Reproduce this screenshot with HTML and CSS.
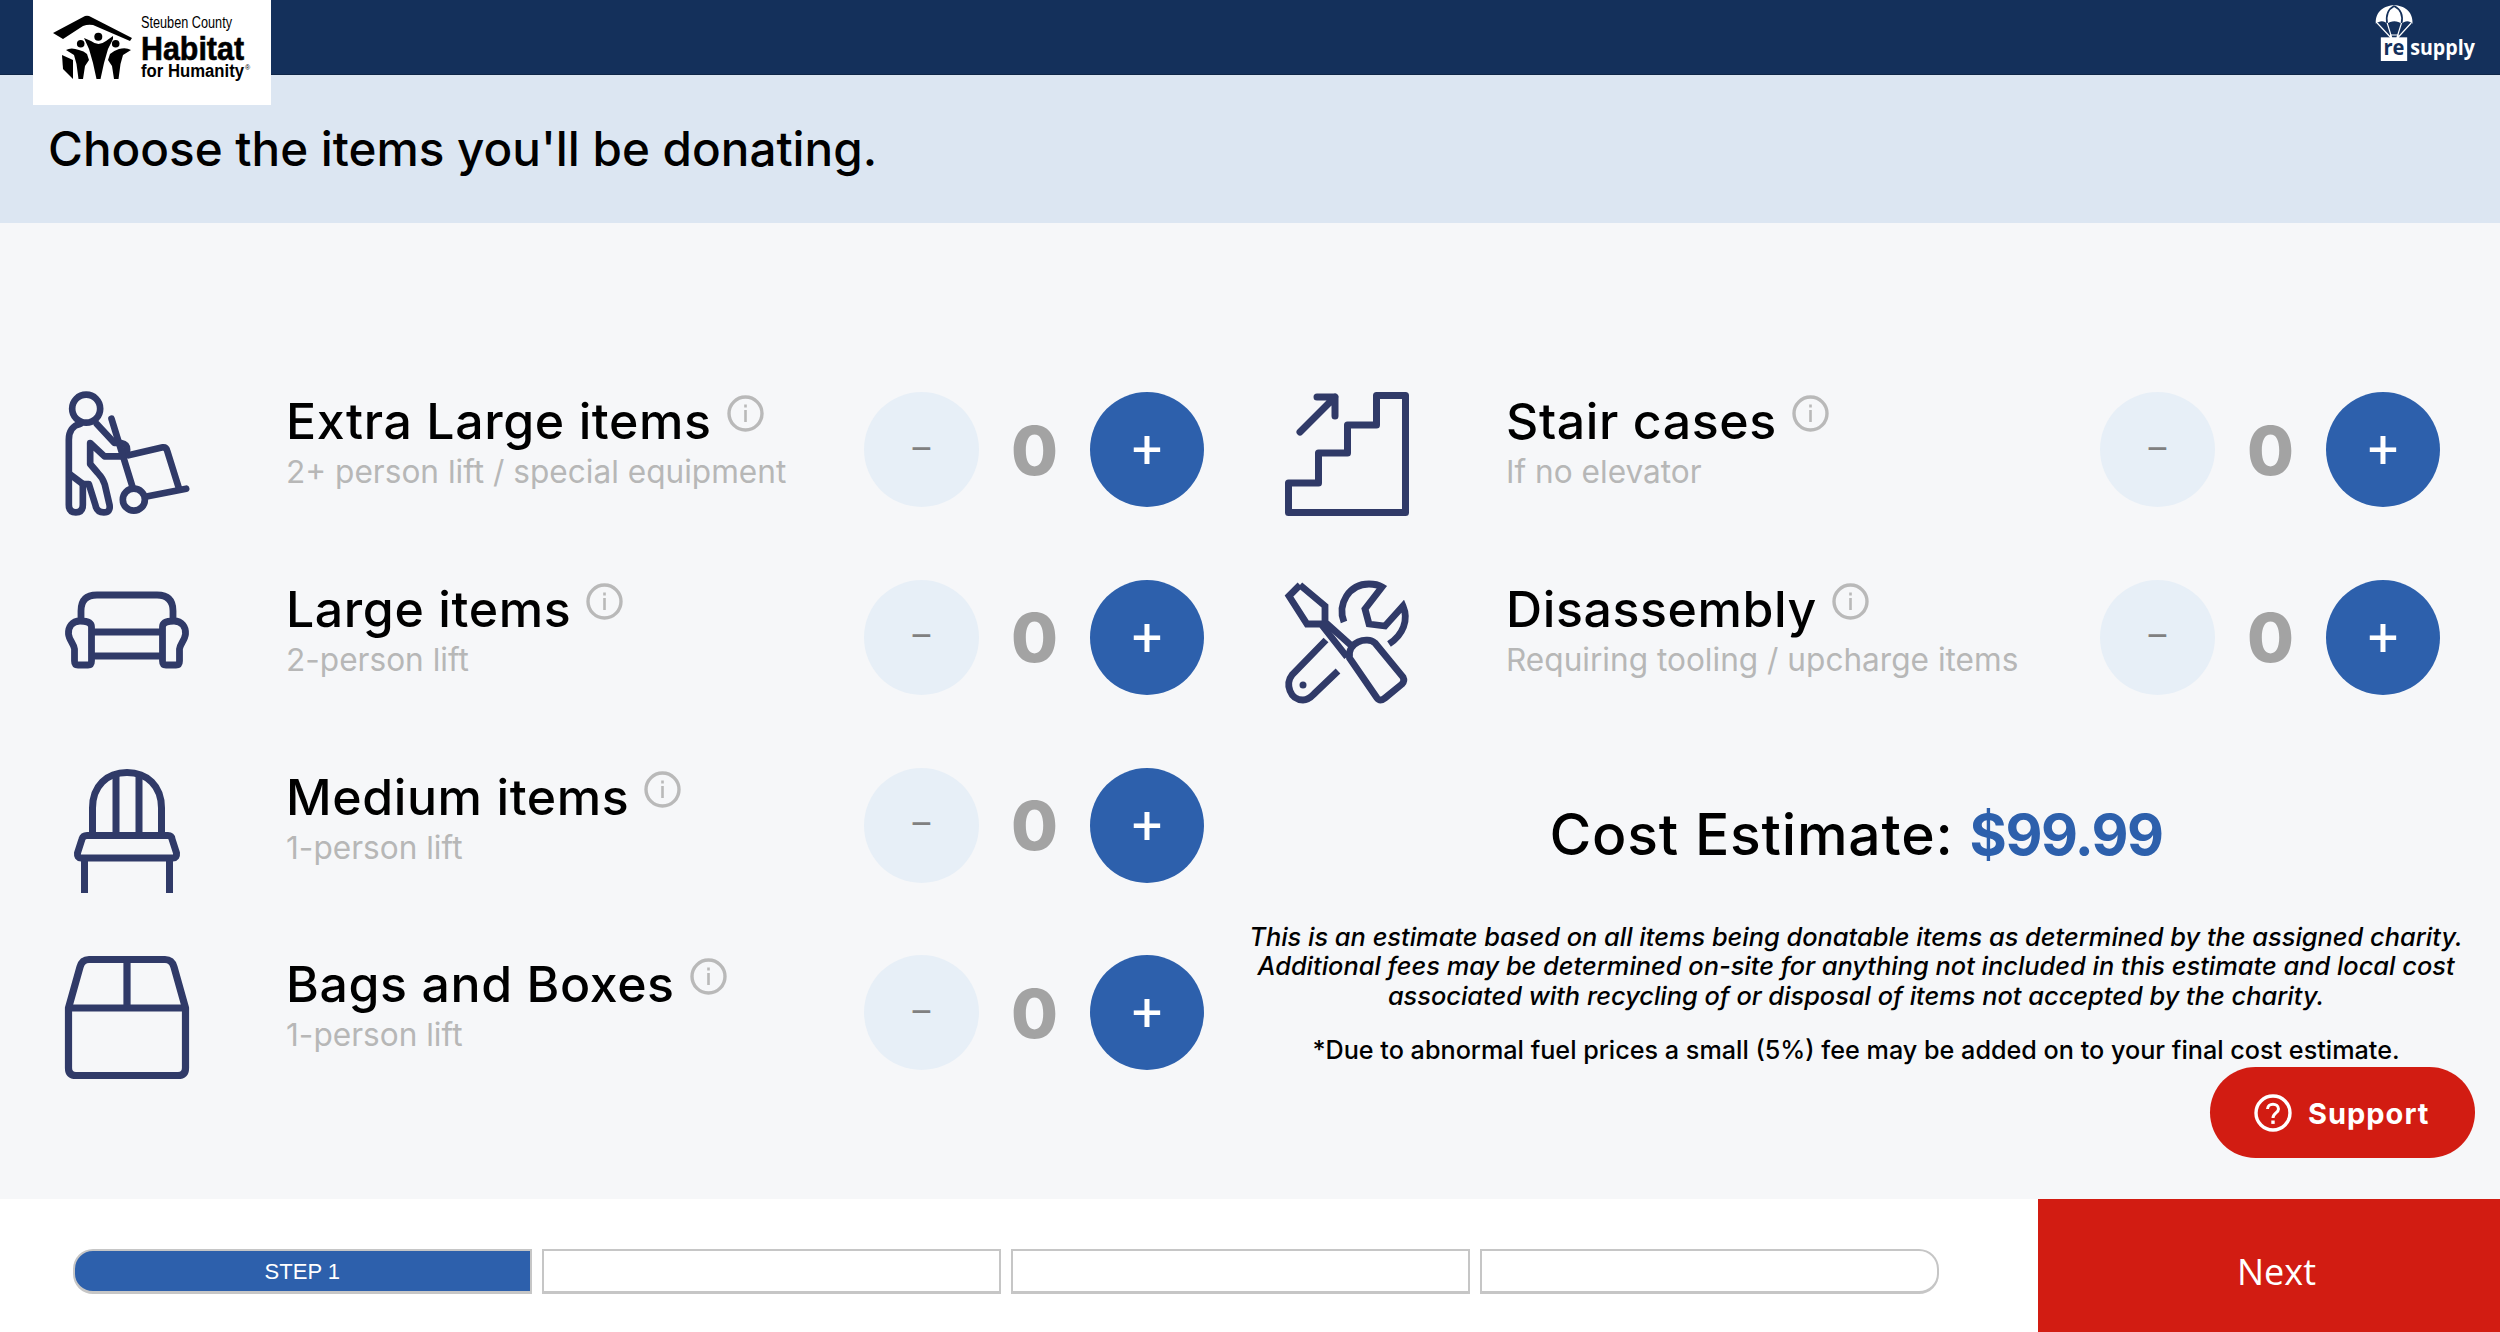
FILE: index.html
```html
<!DOCTYPE html>
<html lang="en">
<head>
<meta charset="utf-8">
<title>Choose items</title>
<link rel="stylesheet" href="styles.css">
</head>
<body>
<svg class="defs" width="0" height="0" aria-hidden="true">
  <defs>
    <symbol id="info" viewBox="0 0 37 37">
      <circle cx="18.5" cy="18.5" r="16.5" fill="none" stroke="#b9b9b9" stroke-width="3.4"/>
      <rect x="17.2" y="9.5" width="2.6" height="3" fill="#b9b9b9"/>
      <rect x="17.2" y="15" width="2.6" height="12" fill="#b9b9b9"/>
    </symbol>
  </defs>
</svg>
<header class="topbar">
  <div class="logo">
    <svg class="logo-svg" viewBox="0 0 238 105" width="238" height="105">
      <g fill="#000">
        <path d="M20 33 L52 16 Q55 15 58 17 L99 38 L97 41 L60 25 Q55 24 50 26 L30 39 Z"/>
        <circle cx="47.700" cy="43.700" r="3.800"/>
        <circle cx="65.300" cy="36.700" r="4"/>
        <circle cx="82.700" cy="43.700" r="3.800"/>
        <path d="M51 38 L58 41 Q62 44 65.500 44 Q69 44 73 41 L80 36 L80 39 L75 49 L71 63 L67.500 79 L63.500 79 L60 63 L56 49 Z"/>
        <path d="M33 50 Q38 47 46 50 Q51 51 54 54 L56 60 L52 66 L50 79 L45.500 79 L43.500 64 L41 55 Z"/>
        <path d="M98 50 Q93 47 86 49 Q80 51 77 54 L75 60 L79 66 L81 79 L85.500 79 L87.500 64 L90 55 Z"/>
        <path d="M29 55 L40 60 L40 79 L30 69 Z"/>
      </g>
      <text class="logo-small" x="108" y="28" textLength="91" lengthAdjust="spacingAndGlyphs">Steuben County</text>
      <text class="logo-big" x="108" y="60" textLength="103" lengthAdjust="spacingAndGlyphs">Habitat</text>
      <text class="logo-mid" x="108" y="77" textLength="103" lengthAdjust="spacingAndGlyphs">for Humanity</text>
      <text class="logo-reg" x="212" y="70">®</text>
    </svg>
  </div>
  <svg class="resupply" viewBox="220 10 350 180" width="117" height="60">
    <path fill="#fff" d="M228 72 C226 35 255 17 283 17 C311 17 340 35 338 72 C330 62 315 62 305 72 C295 62 272 62 262 72 C255 62 238 62 228 72 Z"/>
    <path fill="none" stroke="#14305b" stroke-width="5" d="M283 19 C262 30 258 50 262 72 M283 19 C304 30 310 50 305 72"/>
    <path fill="none" stroke="#fff" stroke-width="3.500" d="M232 70 L274 115 M262 70 L276 115 M305 70 L291 115 M334 70 L293 115"/>
    <rect x="272" y="106" width="23" height="10" fill="none" stroke="#fff" stroke-width="3"/>
    <rect x="243" y="113" width="79" height="71" fill="#fff"/>
    <text class="rs-re" x="251" y="166" textLength="63" lengthAdjust="spacingAndGlyphs">re</text>
    <text class="rs-supply" x="331" y="165" textLength="194" lengthAdjust="spacingAndGlyphs">supply</text>
  </svg>
</header>

<section class="subhead">
  <h1>Choose the items you'll be donating.</h1>
</section>

<main class="main">
  <div class="col col-left">
    <div class="row">
      <svg class="icon" viewBox="16.500 12 372 372" width="124" height="124">
        <g fill="none" stroke="#303a68" stroke-width="20" stroke-linecap="round" stroke-linejoin="round">
          <circle cx="80" cy="62" r="42"/>
          <path d="M62 108 C40 112 28 130 28 155 V350 Q28 373 49 373 Q70 373 70 350 V288 H88 L108 352 Q112 373 133 373 Q154 373 150 350 L136 290 Q130 270 115 255 L92 228 L92 165 L135 205 H185 Q203 203 203 185 Q203 168 185 165 H165 L112 108"/>
          <path d="M30 258 L70 288"/>
          <path d="M156 92 L220 300"/>
          <path d="M207 202 L310 178 Q320 177 323 188 L358 300"/>
          <path d="M265 325 L380 302"/>
          <circle cx="223" cy="335" r="33"/>
        </g>
      </svg>
      <div class="info">
        <div class="title"><span>Extra Large items</span><svg class="i"><use href="#info"/></svg></div>
        <div class="sub">2+ person lift / special equipment</div>
      </div>
      <div class="controls"><button class="btn minus">–</button><span class="count">0</span><button class="btn plus">+</button></div>
    </div>
    <div class="row">
      <svg class="icon" viewBox="0 0 124 124" width="124" height="124">
        <g fill="none" stroke="#303a68" stroke-width="6.800" stroke-linejoin="round">
          <path d="M16 40 V31 Q16 15 32 15 H92 Q108 15 108 31 V40"/>
          <path d="M15 41 C7 41 3 47 3.500 54 C4 60 9 64 9.500 69 V81 Q9.500 85 13 85 H23 Q26.500 85 26.500 81 V47 C26.500 43 22 41 15 41 Z"/>
          <path d="M109 41 C117 41 121 47 120.500 54 C120 60 115 64 114.500 69 V81 Q114.500 85 111 85 H101 Q97.500 85 97.500 81 V47 C97.500 43 102 41 109 41 Z"/>
          <path d="M26.500 52 H97.500 M26.500 76 H97.500"/>
        </g>
      </svg>
      <div class="info">
        <div class="title"><span>Large items</span><svg class="i"><use href="#info"/></svg></div>
        <div class="sub">2-person lift</div>
      </div>
      <div class="controls"><button class="btn minus">–</button><span class="count">0</span><button class="btn plus">+</button></div>
    </div>
    <div class="row">
      <svg class="icon" viewBox="0 0 124 124" width="124" height="124">
        <g fill="none" stroke="#303a68" stroke-width="7" stroke-linejoin="round">
          <path d="M27.500 66 V40 C27.500 18 42 4.500 62 4.500 C82 4.500 96.500 18 96.500 40 V66"/>
          <path d="M51 7 V66 M74 7 V66"/>
          <path d="M22 67.500 H103 Q106.500 67.500 107 71 L111.500 85 Q112 90 108 90 H16 Q12 90 12.500 85 L17 71 Q18 67.500 22 67.500 Z"/>
          <path d="M19.500 90 V125 M104.500 90 V125"/>
        </g>
      </svg>
      <div class="info">
        <div class="title"><span>Medium items</span><svg class="i"><use href="#info"/></svg></div>
        <div class="sub">1-person lift</div>
      </div>
      <div class="controls"><button class="btn minus">–</button><span class="count">0</span><button class="btn plus">+</button></div>
    </div>
    <div class="row">
      <svg class="icon" viewBox="0 0 124 124" width="124" height="124">
        <g fill="none" stroke="#303a68" stroke-width="7.200" stroke-linejoin="round">
          <path d="M3.500 53 V113 Q3.500 120.500 11 120.500 H113 Q120.500 120.500 120.500 113 V53 L109 12 Q107 4.500 100 4.500 H24 Q17 4.500 15 12 Z"/>
          <path d="M3.500 53 H120.500 M62 4.500 V53"/>
        </g>
      </svg>
      <div class="info">
        <div class="title"><span>Bags and Boxes</span><svg class="i"><use href="#info"/></svg></div>
        <div class="sub">1-person lift</div>
      </div>
      <div class="controls"><button class="btn minus">–</button><span class="count">0</span><button class="btn plus">+</button></div>
    </div>
  </div>

  <div class="col col-right">
    <div class="row">
      <svg class="icon" viewBox="0 0 124 124" width="124" height="124">
        <g fill="none" stroke="#303a68" stroke-width="7" stroke-linejoin="round" stroke-linecap="round">
          <path d="M91.500 3.500 H120.500 V120.500 H3.500 V91 H33.500 V61 H62.500 V33 H91.500 Z"/>
          <path d="M15 40 L50 5 M32 5 H50 V24"/>
        </g>
      </svg>
      <div class="info">
        <div class="title"><span>Stair cases</span><svg class="i"><use href="#info"/></svg></div>
        <div class="sub">If no elevator</div>
      </div>
      <div class="controls"><button class="btn minus">–</button><span class="count">0</span><button class="btn plus">+</button></div>
    </div>
    <div class="row">
      <svg class="icon" viewBox="0 0 124 124" width="124" height="124">
        <g fill="none" stroke="#303a68" stroke-width="6.800" stroke-linejoin="miter">
          <path d="M15 5 L4 16 L22 44 H36 L62 77"/>
          <path d="M15 5 L40 26 V42 L69 68"/>
          <path d="M64.500 78 L92 118 Q95 122 100 118 L117 104 Q120 101 118 97 L90 63 C82 56 62 62 64.500 78 Z"/>
          <path d="M59 42 C52 24 64 4 84 4 Q92 4 97 7 L80 29 L84 44 L100 46 L118 26 C124 40 118 55 104 64"/>
          <path d="M41 60 L7 95 C0 104 5 120 18 120 C24 120 27 116 30 113 L53 91"/>
        </g>
        <circle cx="18" cy="105" r="3.500" fill="#303a68"/>
      </svg>
      <div class="info">
        <div class="title"><span>Disassembly</span><svg class="i"><use href="#info"/></svg></div>
        <div class="sub">Requiring tooling / upcharge items</div>
      </div>
      <div class="controls"><button class="btn minus">–</button><span class="count">0</span><button class="btn plus">+</button></div>
    </div>
    <div class="estimate">
      <div class="cost">Cost Estimate: <span class="price">$99.99</span></div>
      <p class="note">This is an estimate based on all items being donatable items as determined by the assigned charity. Additional fees may be determined on-site for anything not included in this estimate and local cost associated with recycling of or disposal of items not accepted by the charity.</p>
      <p class="fuel">*Due to abnormal fuel prices a small (5%) fee may be added on to your final cost estimate.</p>
    </div>
  </div>

  <button class="support">
    <svg viewBox="0 0 38 38" width="38" height="38">
      <circle cx="19" cy="19" r="17" fill="none" stroke="#fff" stroke-width="3.400"/>
      <path d="M13.500 15 C13.500 8.500 24.500 8.500 24.500 15 C24.500 19 19 19 19 24" fill="none" stroke="#fff" stroke-width="3"/>
      <rect x="17.300" y="26.500" width="3.400" height="3.400" fill="#fff"/>
    </svg>
    <span class="support-label">Support</span>
  </button>
</main>

<footer class="footer">
  <div class="steps">
    <div class="step step-first">STEP 1</div>
    <div class="step"></div>
    <div class="step"></div>
    <div class="step step-last"></div>
  </div>
  <button class="next">Next</button>
</footer>
</body>
</html>
```

FILE: styles.css
```css
* { box-sizing: border-box; }
html, body { margin: 0; padding: 0; }
body {
  width: 2500px;
  height: 1332px;
  overflow: hidden;
  font-family: Inter, "Open Sans", sans-serif;
  color: #000;
  background: #f6f7f9;
}
.defs { position: absolute; }
.topbar {
  height: 75px;
  background: #14305b;
  display: flex;
  justify-content: space-between;
  align-items: flex-start;
  padding: 0 10px 0 33px;
  border-bottom: 1px solid #0f2648;
}
.logo {
  width: 238px;
  height: 105px;
  background: #fff;
  position: relative;
  z-index: 2;
  flex: none;
}
.logo-svg { display: block; }
.logo-small, .logo-mid, .logo-big, .logo-reg {
  font-family: "Liberation Sans Narrow", "Liberation Sans", sans-serif;
  fill: #000;
}
.logo-small { font-size: 16px; }
.logo-big { font-size: 34px; font-weight: 700; stroke: #000; stroke-width: 0.6px; }
.logo-mid { font-size: 18px; font-weight: 700; }
.logo-reg { font-size: 7px; }
.resupply { display: block; margin-top: 3px; }
.rs-re { font-family: "Open Sans", sans-serif; font-weight: 700; font-size: 62px; fill: #14305b; }
.rs-supply { font-family: "Open Sans", sans-serif; font-weight: 700; font-size: 66px; fill: #fff; }

.subhead {
  height: 148px;
  background: #dce6f2;
  display: flex;
  align-items: center;
  padding-left: 48px;
}
h1 {
  margin: 0;
  font-size: 47.600px;
  line-height: 56px;
  font-weight: 500;
}
.main {
  height: 976px;
  padding: 169px 60px 0 65px;
  display: flex;
  justify-content: space-between;
  position: relative;
}
.col { display: flex; flex-direction: column; gap: 63.8px; }
.col-left { width: 1139px; }
.col-right { width: 1155px; }
.row { display: flex; align-items: flex-start; height: 124px; }
.icon { flex: none; display: block; margin-right: 97px; overflow: visible; }
.info { flex: 1; padding-top: 1px; }
.title {
  display: flex;
  align-items: flex-start;
  gap: 15px;
  font-size: 50px;
  line-height: 56px;
  letter-spacing: 0.6px;
  font-weight: 500;
}
.i { width: 37px; height: 37px; flex: none; margin-top: 2px; }
.sub {
  font-size: 31.600px;
  line-height: 40px;
  color: #b7b7b7;
  margin-top: 3px;
}
.controls {
  flex: none;
  width: 340px;
  height: 115px;
  display: flex;
  align-items: center;
  justify-content: space-between;
}
.btn {
  width: 115px;
  height: 115px;
  border: 0;
  border-radius: 50%;
  padding: 0;
  font-family: Roboto, sans-serif;
  display: flex;
  align-items: center;
  justify-content: center;
}
.minus { background: #e7eff7; color: #808080; font-size: 36px; }
.plus { width: 114px; background: #2d60ac; color: #fff; font-size: 54px; }
.count {
  font-size: 68px;
  line-height: 80px;
  font-weight: 800;
  color: #a3a3a3;
}
.estimate {
  width: 1232px;
  margin-left: -45px;
  text-align: center;
}
.cost {
  font-size: 57px;
  line-height: 68px;
  font-weight: 500;
  letter-spacing: 0.8px;
  margin-top: 33px;
}
.price { color: #2d60ac; font-weight: 700; letter-spacing: -1.5px; }
.note {
  margin: 53px 0 0;
  font-size: 25.400px;
  line-height: 29.500px;
  font-style: italic;
  font-weight: 500;
}
.fuel {
  margin: 26px 0 0;
  font-size: 25.200px;
  line-height: 29.500px;
  font-weight: 500;
}
.support {
  position: absolute;
  left: 2210px;
  top: 844px;
  width: 265px;
  height: 91px;
  border: 0;
  border-radius: 46px;
  background: #d21c12;
  color: #fff;
  display: flex;
  align-items: center;
  gap: 16px;
  padding: 0 0 0 44px;
  font-family: Inter, sans-serif;
  font-size: 29px;
  font-weight: 700;
  letter-spacing: 1px;
}
.support svg { flex: none; }
.support-label { padding-top: 2px; }
.footer {
  height: 133px;
  background: #fff;
  display: flex;
  align-items: stretch;
  justify-content: space-between;
  padding-left: 73px;
}
.steps {
  width: 1866px;
  height: 45px;
  margin-top: 50px;
  display: flex;
  gap: 10.500px;
}
.step {
  flex: 1;
  border: 2px solid #c6c6c6;
  border-bottom-width: 3px;
  background: #fff;
  font-family: "Liberation Sans", sans-serif;
  font-size: 22px;
  color: #fff;
  display: flex;
  align-items: center;
  justify-content: center;
  padding-top: 2px;
}
.step-first { background: #2d60ac; border-radius: 20px 0 0 20px; }
.step-last { border-radius: 0 20px 20px 0; }
.next {
  width: 462px;
  border: 0;
  padding: 11px 0 0 15px;
  background: #d21c12;
  color: #fff;
  font-family: "Open Sans", sans-serif;
  font-size: 36px;
}
```
